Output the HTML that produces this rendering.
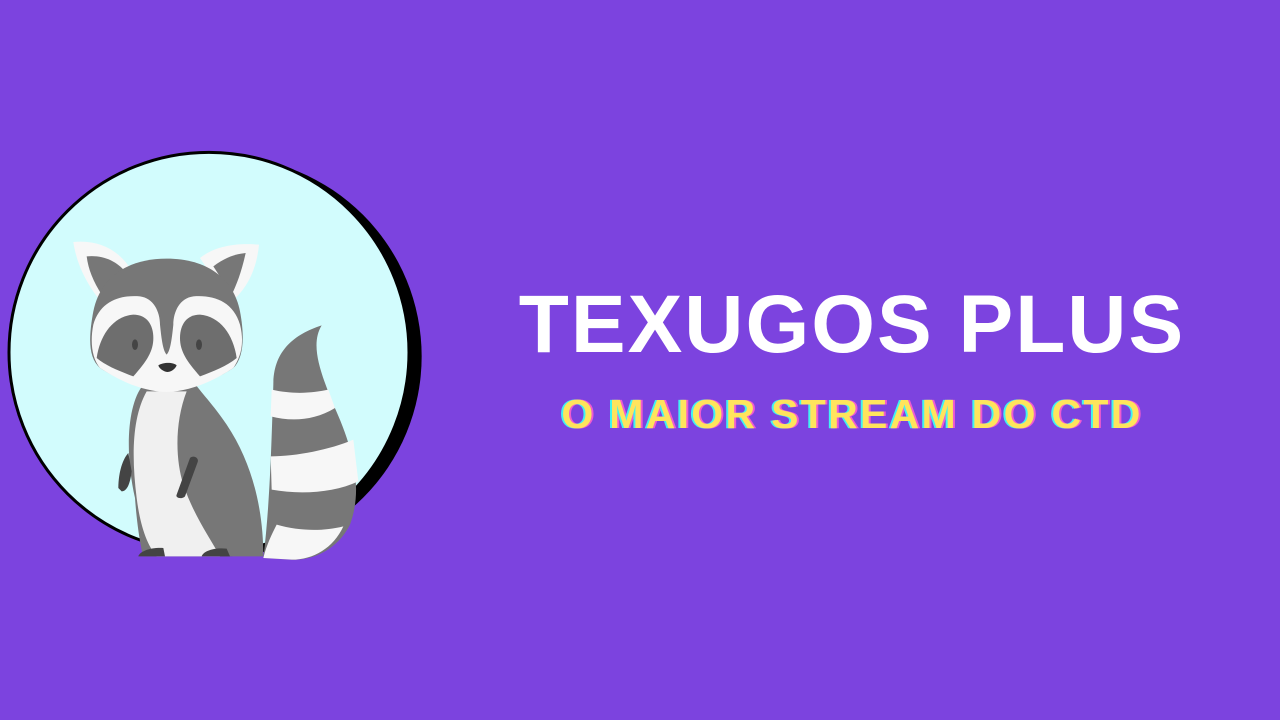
<!DOCTYPE html>
<html><head><meta charset="utf-8"><style>
html,body{margin:0;padding:0;width:1280px;height:720px;overflow:hidden;background:#7c43df;}
.t{position:absolute;left:852px;transform:translateX(-50%);white-space:nowrap;font-family:"Liberation Sans",sans-serif;font-weight:bold;}
#t1{top:280px;font-size:82px;color:#fff;letter-spacing:2px;line-height:90px;}
#t2{top:390px;font-size:41px;color:#ffe45c;line-height:48px;letter-spacing:2.3px;text-shadow:-2px 0 #3ff2f2,2px 0 #f05bd0;}
svg{position:absolute;left:0;top:138px;}
</style></head><body>
<svg width="430" height="430" viewBox="0 0 1290 1290">
<circle cx="665" cy="655" r="600" fill="#000"/>
<circle cx="627" cy="643" r="600" fill="#d2fcfd" stroke="#000" stroke-width="9"/>
<path d="M820 740 C820 640 880 590 965 562 C930 620 960 700 1000 800 C1060 930 1090 1050 1050 1160 C1010 1240 930 1270 870 1265 L790 1260 C810 1100 815 900 820 740Z" fill="#777"/>
<path d="M815 755 C880 770 940 765 985 755 L1005 810 C940 850 870 850 812 835Z" fill="#f7f7f7"/>
<path d="M812 955 C890 955 990 935 1060 905 L1075 1030 C1000 1065 900 1070 815 1055Z" fill="#f7f7f7"/>
<path d="M830 1160 C900 1180 970 1180 1030 1165 C1000 1230 940 1265 875 1265 L790 1260 C800 1220 815 1190 830 1160Z" fill="#f7f7f7"/>
<path d="M430 740 C380 800 375 950 405 1080 C410 1150 420 1220 430 1255 L790 1255 C790 1120 760 980 680 860 C640 800 600 760 580 730Z" fill="#777"/>
<path d="M440 760 C395 840 395 960 410 1080 C420 1160 440 1220 470 1255 L660 1255 C630 1200 580 1130 550 1040 C525 960 525 850 560 760Z" fill="#f0f0f0"/>
<path d="M355 1050 C355 1000 370 960 385 945 L395 1000 C390 1040 380 1060 365 1060Z" fill="#444"/>
<path d="M530 1070 L570 960 C580 950 600 960 592 975 L555 1075 C545 1085 525 1080 530 1070Z" fill="#444"/>
<path d="M415 1255 C420 1240 450 1228 490 1230 L495 1255Z M605 1255 C610 1240 640 1228 680 1232 L690 1255Z" fill="#444"/>
<path d="M220 312 C290 305 350 330 390 390 L310 500 C260 440 230 380 220 312Z" fill="#f7f7f7"/>
<path d="M260 355 C310 350 350 370 375 400 L305 470 C280 430 265 395 260 355Z" fill="#777"/>
<path d="M600 360 C650 320 720 315 777 320 C770 390 745 450 690 495Z" fill="#f7f7f7"/>
<path d="M640 385 C680 355 710 348 737 345 C725 400 710 440 695 470Z" fill="#777"/>
<path d="M500 362 C620 362 700 420 720 520 C735 600 730 660 700 690 C640 730 570 750 500 760 C430 750 360 730 300 690 C265 660 265 600 280 520 C300 420 380 362 500 362Z" fill="#777"/>
<path d="M280 560 C300 490 360 470 420 475 C460 480 480 520 480 560 C485 610 490 640 500 650 C510 640 515 610 520 560 C520 520 540 480 580 475 C640 470 700 490 720 560 C735 620 720 660 700 690 C640 730 570 760 500 762 C430 760 360 730 300 690 C275 660 270 610 280 560Z" fill="#f7f7f7"/>
<path d="M290 660 C300 590 340 535 400 530 C440 530 460 560 460 600 C460 640 440 670 400 715 C360 700 320 685 290 660Z" fill="#6e6e6e"/>
<path d="M710 660 C700 590 660 535 600 530 C560 530 540 560 540 600 C540 640 560 670 600 715 C640 700 680 685 710 660Z" fill="#6e6e6e"/>
<ellipse cx="405" cy="620" rx="9" ry="16" fill="#444"/>
<ellipse cx="597" cy="620" rx="9" ry="16" fill="#444"/>
<path d="M475 682 C490 672 520 672 530 682 C525 695 510 702 502 702 C490 700 478 692 475 682Z" fill="#333"/>
</svg>
<div class="t" id="t1">TEXUGOS PLUS</div>
<div class="t" id="t2">O MAIOR STREAM DO CTD</div>
</body></html>
